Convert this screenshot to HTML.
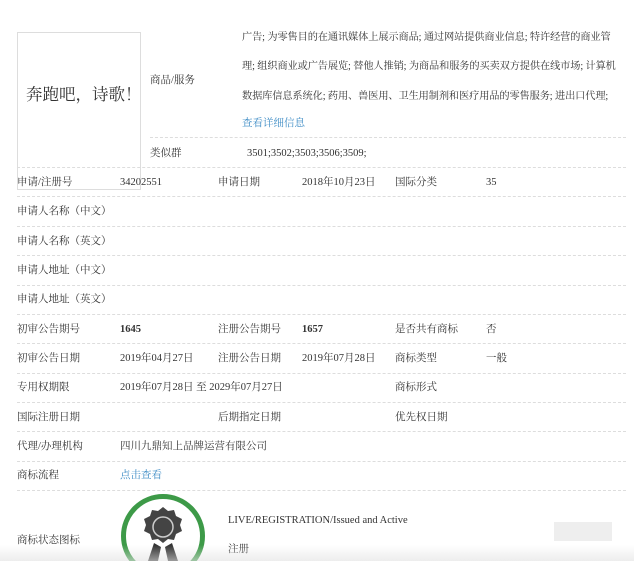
<!DOCTYPE html>
<html><head><meta charset="utf-8"><style>
html,body{margin:0;width:634px;height:561px;overflow:hidden}
body{background:#fff;position:relative;font-family:"Liberation Serif","Noto Serif CJK SC",serif;font-size:10.5px;color:#333}
.a{position:absolute;white-space:nowrap;line-height:14px}
.hl{position:absolute;left:17px;right:8px;border-top:1px dashed #ddd;height:0}
.link{color:#3a8ac4}
b{font-weight:bold}
.g{font-size:10.2px;letter-spacing:-0.1px}
</style></head><body>
<div class="a" style="left:17px;top:32px;width:124px;height:158px;border:1px solid #ddd;box-sizing:border-box"></div>
<div class="a" style="left:26px;top:85px;font-size:16.5px;line-height:20px;color:#333">奔跑吧，诗歌！</div>
<div class="a" style="left:150px;top:74px">商品/服务</div>
<div class="a g" style="left:242px;top:31px">广告; 为零售目的在通讯媒体上展示商品; 通过网站提供商业信息; 特许经营的商业管</div>
<div class="a g" style="left:242px;top:60px">理; 组织商业或广告展览; 替他人推销; 为商品和服务的买卖双方提供在线市场; 计算机</div>
<div class="a g" style="left:242px;top:90px">数据库信息系统化; 药用、兽医用、卫生用制剂和医疗用品的零售服务; 进出口代理;</div>
<div class="a link" style="left:242px;top:117px">查看详细信息</div>
<div class="hl" style="left:150px;top:137px"></div>
<div class="a" style="left:150px;top:147px">类似群</div>
<div class="a" style="left:247px;top:147px">3501;3502;3503;3506;3509;</div>
<div class="hl" style="top:167px"></div>

<div class="a" style="left:17px;top:176px">申请/注册号</div><div class="a" style="left:120px;top:176px">34202551</div>
<div class="a" style="left:218px;top:176px">申请日期</div><div class="a" style="left:302px;top:176px">2018年10月23日</div>
<div class="a" style="left:395px;top:176px">国际分类</div><div class="a" style="left:486px;top:176px">35</div>
<div class="hl" style="top:196px"></div>
<div class="a" style="left:17px;top:205px">申请人名称（中文）</div>
<div class="hl" style="top:226px"></div>
<div class="a" style="left:17px;top:235px">申请人名称（英文）</div>
<div class="hl" style="top:255px"></div>
<div class="a" style="left:17px;top:264px">申请人地址（中文）</div>
<div class="hl" style="top:285px"></div>
<div class="a" style="left:17px;top:293px">申请人地址（英文）</div>
<div class="hl" style="top:314px"></div>
<div class="a" style="left:17px;top:323px">初审公告期号</div><div class="a" style="left:120px;top:323px"><b>1645</b></div>
<div class="a" style="left:218px;top:323px">注册公告期号</div><div class="a" style="left:302px;top:323px"><b>1657</b></div>
<div class="a" style="left:395px;top:323px">是否共有商标</div><div class="a" style="left:486px;top:323px">否</div>
<div class="hl" style="top:343px"></div>
<div class="a" style="left:17px;top:352px">初审公告日期</div><div class="a" style="left:120px;top:352px">2019年04月27日</div>
<div class="a" style="left:218px;top:352px">注册公告日期</div><div class="a" style="left:302px;top:352px">2019年07月28日</div>
<div class="a" style="left:395px;top:352px">商标类型</div><div class="a" style="left:486px;top:352px">一般</div>
<div class="hl" style="top:373px"></div>
<div class="a" style="left:17px;top:381px">专用权期限</div><div class="a" style="left:120px;top:381px">2019年07月28日 至 2029年07月27日</div>
<div class="a" style="left:395px;top:381px">商标形式</div>
<div class="hl" style="top:402px"></div>
<div class="a" style="left:17px;top:411px">国际注册日期</div>
<div class="a" style="left:218px;top:411px">后期指定日期</div>
<div class="a" style="left:395px;top:411px">优先权日期</div>
<div class="hl" style="top:431px"></div>
<div class="a" style="left:17px;top:440px">代理/办理机构</div><div class="a" style="left:120px;top:440px">四川九鼎知上品牌运营有限公司</div>
<div class="hl" style="top:461px"></div>
<div class="a" style="left:17px;top:469px">商标流程</div><div class="a link" style="left:120px;top:469px">点击查看</div>
<div class="hl" style="top:490px"></div>
<div class="a" style="left:17px;top:534px">商标状态图标</div>
<div class="a" style="left:121px;top:494px;width:84px;height:84px;border:5px solid #3d9a48;border-radius:50%;box-sizing:border-box"></div>
<svg class="a" style="left:138px;top:505px" width="50" height="56" viewBox="0 0 50 56">
<path d="M25 2l5 4 6-1 2 6 6 3-2 6 2 6-6 3-2 6-6-1-5 4-5-4-6 1-2-6-6-3 2-6-2-6 6-3 2-6 6 1z" fill="#444"/>
<circle cx="25" cy="22" r="10" fill="none" stroke="#ccc" stroke-width="1.5"/>
<path d="M16 38l-6 18h10l3-14zM34 38l6 18H30l-3-14z" fill="#333"/>
</svg>
<div class="a" style="left:228px;top:514px">LIVE/REGISTRATION/Issued and Active</div>
<div class="a" style="left:228px;top:543px">注册</div>
<div class="a" style="left:554px;top:522px;width:58px;height:19px;background:#eee"></div>
<div class="a" style="left:0;top:545px;width:634px;height:16px;background:linear-gradient(rgba(230,230,230,0),rgba(225,225,225,.6))"></div>
</body></html>
